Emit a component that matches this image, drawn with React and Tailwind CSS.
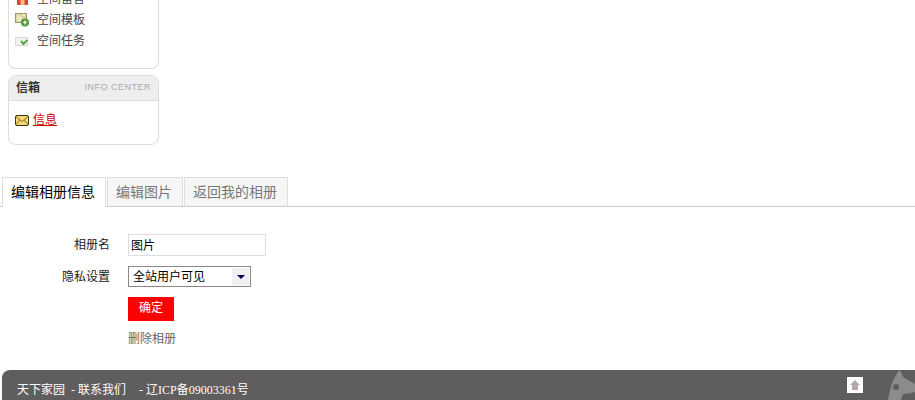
const cjk = "font-['Liberation_Sans','Noto_Sans_CJK_SC',sans-serif]";

function TemplateIcon() {
  return (
    <svg width="15" height="14" viewBox="0 0 15 14">
      <rect x="0.5" y="0.5" width="11" height="9" fill="#d8d49a" stroke="#9c9a68" />
      <path d="M2 3h3M2 5h5M7 2h3M2 7h4" stroke="#fff" strokeWidth="1" />
      <circle cx="10" cy="9.500" r="4" fill="#4f9a3c" />
      <path d="M10 7.500v4M8 9.500h4" stroke="#fff" strokeWidth="1.200" />
    </svg>
  );
}

function TaskIcon() {
  return (
    <svg width="15" height="14" viewBox="0 0 15 14">
      <rect x="0.500" y="3.500" width="12" height="8" fill="#f1f2f4" stroke="#d5d9e0" />
      <path d="M6 7l2.500 3 4-4" fill="none" stroke="#5aa83a" strokeWidth="2" />
    </svg>
  );
}

function HomeIcon() {
  return (
    <svg className="translate-y-[-1px]" width="15" height="14" viewBox="0 0 15 14">
      <path d="M7.500 0L14 6v3h-1v5H2V9H1V6z" fill="#d9482c" />
      <rect x="5.500" y="9" width="4" height="5" fill="#f6b98a" />
    </svg>
  );
}

function MailIcon() {
  return (
    <svg width="14" height="11" viewBox="0 0 14 11">
      <rect x="0.500" y="0.500" width="13" height="10" rx="1.500" fill="#f5d76e" stroke="#3a3320" />
      <path d="M1 1.500l6 5 6-5M1 9.500l4-4.500M13 9.500l-4-4.500" fill="none" stroke="#7a6420" strokeWidth="0.900" />
    </svg>
  );
}

function MenuRow({ icon, label }) {
  return (
    <div className="flex h-[21px] items-center gap-[7px] pl-[6px] text-[12px] text-[#444]">
      <span className="flex w-[15px] justify-center">{icon}</span>
      <span>{label}</span>
    </div>
  );
}

function Tab({ active, children }) {
  return (
    <div
      className={
        active
          ? "relative z-10 -mb-px flex h-[30px] items-center border border-b-0 border-[#ddd] bg-white pl-[8px] pr-[10px] text-[14px] text-black"
          : "flex h-[29px] items-center border border-b-0 border-[#ddd] bg-[#f6f6f6] pl-[8px] pr-[10px] text-[14px] text-[#777]"
      }
    >
      {children}
    </div>
  );
}

function FormRow({ label, children, className }) {
  return (
    <div className={`flex items-center ${className}`}>
      <label className="w-[110px] text-right text-[12px] text-[#222]">{label}</label>
      <div className="ml-[18px]">{children}</div>
    </div>
  );
}

export default function App() {
  return (
    <div className={`h-[400px] w-[915px] overflow-hidden bg-white ${cjk}`}>
      <div className="ml-2 -mt-[12px] flex w-[151px] flex-col gap-[6px]">
        <div className="h-[81px] rounded-b-[8px] border border-t-0 border-[#ddd]">
          <MenuRow icon={<HomeIcon />} label="空间留言" />
          <MenuRow icon={<TemplateIcon />} label="空间模板" />
          <MenuRow icon={<TaskIcon />} label="空间任务" />
        </div>
        <div className="h-[70px] overflow-hidden rounded-[8px] border border-[#ddd]">
          <div className="flex h-[25px] items-center justify-between border-b border-[#ddd] bg-[#eee] px-[7px]">
            <span className="text-[12px] font-bold text-[#333]">信箱</span>
            <span className="text-[9px] tracking-[0.5px] text-[#aaa]">INFO CENTER</span>
          </div>
          <div className="flex items-center gap-[4px] pl-[6px] pt-[10px]">
            <MailIcon />
            <a className="text-[12px] text-[#c00] underline">信息</a>
          </div>
        </div>
      </div>

      <div className="mt-[32px] flex h-[30px] items-end gap-[1px] border-b border-[#ccc] pl-[2px]">
        <Tab active>编辑相册信息</Tab>
        <Tab>编辑图片</Tab>
        <Tab>返回我的相册</Tab>
      </div>

      <div className="pt-[27px]">
        <FormRow label="相册名" className="h-[22px]">
          <input
            readOnly
            value="图片"
            className="block h-[22px] w-[138px] border border-[#ddd] px-[2px] pb-[2px] text-[12px] text-black outline-none"
          />
        </FormRow>
        <FormRow label="隐私设置" className="mt-[10px] h-[21px]">
          <div className="flex h-[21px] w-[123px] items-center justify-between border border-[#888] pl-[4px] pr-[1px] text-[12px] text-black">
            <span>全站用户可见</span>
            <span className="flex h-[17px] w-[17px] items-center justify-center bg-[#eef0f4]">
              <span className="border-x-[4px] border-t-[4px] border-x-transparent border-t-[#000050]" />
            </span>
          </div>
        </FormRow>
        <div className="ml-[128px] mt-[10px] flex h-[24px] w-[46px] items-center justify-center bg-[#f00] pb-[2px] text-[12px] text-white">
          确定
        </div>
        <div className="ml-[128px] mt-[9px] text-[12px] leading-[18px] text-[#666]">删除相册</div>
      </div>

      <div className="relative ml-[2px] mt-[22px] flex h-[30px] items-start justify-between overflow-hidden rounded-tl-[8px] bg-[#5f5d5e] pl-[15px] font-['Liberation_Serif','Noto_Sans_CJK_SC',serif] text-[12px] text-white">
        <div className="flex pt-[11px]">
          <span>天下家园</span>
          <span className="ml-[6px]">- 联系我们</span>
          <span className="ml-[13px]">- 辽ICP备09003361号</span>
        </div>
        <div className="mr-[52px] mt-[7px] flex h-[16px] w-[16px] items-center justify-center bg-white">
          <svg width="12" height="12" viewBox="0 0 12 12">
            <path d="M6 1l5 5H9v5H3V6H1z" fill="#b5aaa9" />
          </svg>
        </div>
        <svg className="absolute right-0 top-0" width="30" height="30" viewBox="0 0 30 30">
          <path d="M15 0C9 6 6 14 3 30H16L18 24C22 24 26 23 30 22V14C26 12 22 9 18 7C17 4 16 2 15 0Z" fill="#8c8a8b" />
          <circle cx="11" cy="17" r="3" fill="#5f5d5e" />
        </svg>
      </div>
    </div>
  );
}
